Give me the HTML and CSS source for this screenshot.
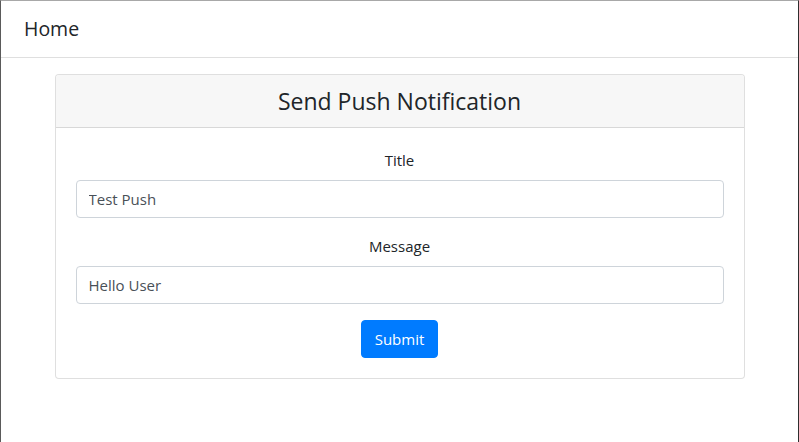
FILE: index.html
```html
<!DOCTYPE html>
<html lang="en">
<head>
<meta charset="utf-8">
<title>Send Push Notification</title>
<link rel="stylesheet" href="styles.css">
</head>
<body>
<nav class="navbar">
  <a class="brand" href="#">Home</a>
</nav>
<main class="container">
  <section class="card">
    <header class="card-header">
      <h3 class="card-title">Send Push Notification</h3>
    </header>
    <form class="card-body">
      <div class="form-group">
        <label class="label" for="title">Title</label>
        <input class="input" id="title" type="text" value="Test Push">
      </div>
      <div class="form-group">
        <label class="label" for="message">Message</label>
        <input class="input" id="message" type="text" value="Hello User">
      </div>
      <div class="actions">
        <button class="btn" type="button">Submit</button>
      </div>
    </form>
  </section>
</main>
</body>
</html>
```

FILE: styles.css
```css
* { box-sizing: border-box; }
html, body { height: 100%; }
body {
  margin: 0;
  background: #fff;
  color: #212529;
  font-family: "Open Sans", "Noto Sans", sans-serif;
  font-size: 15px;
  line-height: 1.5;
  border-top: 1px solid #a8a8a8;
  border-left: 1px solid #5a5a5a;
  border-right: 1px solid #2e2e2e;
}
.navbar {
  height: 57px;
  display: flex;
  align-items: center;
  padding: 0 23px;
  border-bottom: 1px solid #dfdfdf;
}
.brand {
  color: #212529;
  text-decoration: none;
  font-size: 19.5px;
  line-height: 30px;
}
.container {
  max-width: 690px;
  margin: 16px auto 0;
}
.card {
  border: 1px solid rgba(0,0,0,.125);
  border-radius: 4px;
  background: #fff;
}
.card-header {
  background: #f7f7f7;
  border-bottom: 1px solid rgba(0,0,0,.125);
  padding: 12px 20px;
  text-align: center;
  border-radius: 3px 3px 0 0;
}
.card-title {
  margin: 0;
  font-weight: 400;
  font-size: 23px;
  line-height: 28px;
}
.card-body {
  padding: 20px;
  display: flex;
  flex-direction: column;
  gap: 16px;
}
.form-group {
  display: flex;
  flex-direction: column;
  align-items: stretch;
  gap: 8px;
}
.label {
  text-align: center;
  line-height: 24px;
}
.input {
  height: 38px;
  padding: 6px 12px;
  font: inherit;
  color: #495057;
  border: 1px solid #ced4da;
  border-radius: 4px;
  background: #fff;
}
.actions {
  display: flex;
  justify-content: center;
}
.btn {
  height: 38px;
  padding: 6px 13px;
  font: inherit;
  color: #fff;
  background: #007bff;
  border: 1px solid #007bff;
  border-radius: 4px;
}
```
